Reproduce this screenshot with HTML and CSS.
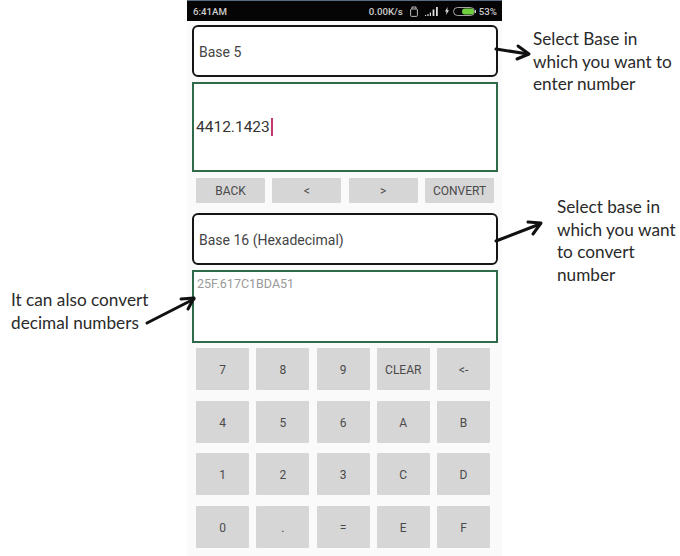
FILE: index.html
```html
<!DOCTYPE html>
<html lang="en">
<head>
    <meta charset="UTF-8">
    <meta name="viewport" content="width=device-width, initial-scale=1.0">
    <title>Number Base Converter</title>
    <link rel="stylesheet" href="styles.css">
</head>
<body>

    <div class="page">
        <!-- Phone screenshot -->
        <div class="phone">
            <div class="status-bar">
                <span>6:41AM</span>
                <div class="status-right">
                    <span>0.00K/s</span>
                    <svg class="icon-lock" width="8" height="11" viewBox="0 0 8 11">
                        <rect x="0.6" y="3" width="6.8" height="7.4" rx="1" fill="none" stroke="#bbb" stroke-width="1"/>
                        <path d="M2 3V1h4v2" fill="none" stroke="#bbb" stroke-width="1"/>
                    </svg>
                    <svg class="icon-signal" width="13" height="9" viewBox="0 0 13 9">
                        <path d="M0 8h1.2v1H0zM2.4 7h1.2v2H2.4zM4.8 5.5H6V9H4.8zM7.6 2.5h1.8V9H7.6zM11 0h1.8v9H11z" fill="#ddd"/>
                    </svg>
                    <svg class="icon-bolt" width="4" height="8" viewBox="0 0 4 8">
                        <path d="M2.6 0L0 4.5h1.5L1 8l3-4.8H2.4z" fill="#ddd"/>
                    </svg>
                    <svg class="icon-battery" width="23" height="9" viewBox="0 0 23 9">
                        <rect x="0.5" y="0.5" width="21" height="8" rx="4" fill="none" stroke="#ccc" stroke-width="0.8"/>
                        <rect x="9" y="1.5" width="12" height="6" rx="3" fill="#6fcf3f"/>
                        <rect x="22" y="3" width="1" height="3" fill="#ccc"/>
                    </svg>
                    <span>53%</span>
                </div>
            </div>

            <div class="form">
                <div class="spinner">Base 5</div>
                <div class="input input-from">4412.1423<span class="cursor"></span></div>

                <div class="nav-buttons">
                    <div class="button">BACK</div>
                    <div class="button">&lt;</div>
                    <div class="button">&gt;</div>
                    <div class="button">CONVERT</div>
                </div>

                <div class="spinner spinner-to">Base 16 (Hexadecimal)</div>
                <div class="input input-to">25F.617C1BDA51</div>

                <div class="keypad">
                    <div class="button">7</div>
                    <div class="button">8</div>
                    <div class="button">9</div>
                    <div class="button">CLEAR</div>
                    <div class="button">&lt;-</div>
                    <div class="button">4</div>
                    <div class="button">5</div>
                    <div class="button">6</div>
                    <div class="button">A</div>
                    <div class="button">B</div>
                    <div class="button">1</div>
                    <div class="button">2</div>
                    <div class="button">3</div>
                    <div class="button">C</div>
                    <div class="button">D</div>
                    <div class="button">0</div>
                    <div class="button">.</div>
                    <div class="button">=</div>
                    <div class="button">E</div>
                    <div class="button">F</div>
                </div>
            </div>
        </div>

        <!-- Notes drawn on top of the screenshot -->
        <div class="note note-from">Select Base in<br>which you want to<br>enter number</div>
        <div class="note note-to">Select base in<br>which you want<br>to convert<br>number</div>
        <div class="note note-decimal">It can also convert<br>decimal numbers</div>

        <svg class="arrows" width="680" height="556" viewBox="0 0 680 556">
            <g fill="none" stroke="#111" stroke-width="3" stroke-linecap="round" stroke-linejoin="round">
                <path d="M496 49L528 54"/>
                <path d="M518 46L529 54L517 59"/>
                <path d="M496 241L540 224"/>
                <path d="M528 222L541 223L533 234"/>
                <path d="M147 323L194 299"/>
                <path d="M181 299L194 298L188 309"/>
            </g>
        </svg>
    </div>

</body>
</html>
```

FILE: styles.css
```css
/* Page canvas */
body {
    margin: 0;
    background-color: #fff;
}

.page {
    position: relative;
    width: 680px;
    height: 556px;
    overflow: hidden;
    padding-left: 187px;
    box-sizing: border-box;
}

/* Phone column */
.phone {
    width: 315px;
    height: 556px;
    background-color: #fafafa;
    font-family: Roboto, "Liberation Sans", sans-serif;
    color: #444;
}

.status-bar {
    height: 21px;
    padding: 0 5px 0 6px;
    display: flex;
    justify-content: space-between;
    align-items: center;
    background-color: #050505;
    border-top: 1px solid #5a6a80;
    box-sizing: border-box;
    color: #ccc;
    font-size: 9.7px;
    font-weight: 500;
}

.status-right {
    display: flex;
    align-items: center;
    gap: 4px;
}

.icon-lock {
    margin-left: 3px;
}

.icon-signal {
    margin-left: 3px;
}

.icon-bolt {
    margin-left: 3px;
}

.icon-battery {
    margin-right: -1px;
}

.form {
    padding: 4px 4px 0 5px;
}

/* Base selectors */
.spinner {
    height: 52px;
    padding: 1px 0 0 5px;
    display: flex;
    align-items: center;
    background-color: #fff;
    border: 2px solid #151515;
    border-radius: 6px;
    box-sizing: border-box;
    font-size: 14px;
}

.spinner-to {
    margin-top: 10px;
}

/* Number fields */
.input {
    margin-top: 5px;
    background-color: #fff;
    border: 2px solid #2f6b4a;
    box-sizing: border-box;
}

.input-from {
    height: 90px;
    padding-left: 2px;
    display: flex;
    align-items: center;
    font-size: 15.5px;
    color: #333;
}

.cursor {
    width: 2px;
    height: 18px;
    margin-left: 1px;
    background-color: #c2386f;
}

.input-to {
    height: 73px;
    padding: 4px 3px;
    font-size: 12.5px;
    color: #999;
}

/* Grey buttons */
.button {
    display: flex;
    align-items: center;
    justify-content: center;
    background-color: #d6d6d6;
    border-radius: 1px;
    font-size: 12px;
    color: #4a4a4a;
}

.nav-buttons {
    margin: 6px 4px 0 4px;
    display: grid;
    grid-template-columns: repeat(4, 69px);
    column-gap: 7.33px;
    height: 25px;
}

.keypad {
    margin: 5px 0 0 4px;
    display: grid;
    grid-template-columns: repeat(5, 53px);
    grid-auto-rows: 42px;
    column-gap: 7.25px;
    row-gap: 10.5px;
}

.keypad .button {
    padding-top: 2px;
    box-sizing: border-box;
}

/* Annotations */
.note {
    position: absolute;
    font-family: Lato, "Open Sans", sans-serif;
    font-size: 17.2px;
    line-height: 22.5px;
    color: #2a2a2a;
    white-space: nowrap;
}

.note-from {
    left: 533px;
    top: 28px;
}

.note-to {
    left: 557px;
    top: 196px;
}

.note-decimal {
    left: 11px;
    top: 289px;
}

.arrows {
    position: absolute;
    left: 0;
    top: 0;
}
```
